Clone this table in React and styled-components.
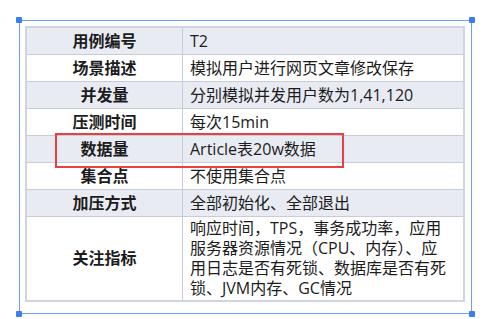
import React from "react";
import styled, { createGlobalStyle } from "styled-components";

const Global = createGlobalStyle`
  html, body {
    margin: 0;
    padding: 0;
    background: #ffffff;
  }
  body {
    font-family: "Open Sans", "Noto Sans CJK SC", sans-serif;
    color: #1c1c1c;
  }
`;

const Page = styled.div`
  width: 500px;
  height: 319px;
  padding: 20px 0 0 19px;
  box-sizing: border-box;
`;

const Frame = styled.div`
  position: relative;
  width: 453px;
  height: 294px;
  box-sizing: border-box;
  border: 1px solid #6f9ff2;
  padding: 5px 0 0 5px;
`;

const Handle = styled.span`
  position: absolute;
  width: 6px;
  height: 6px;
  background: #3a7ef0;
  border-radius: 1px;
  ${(p) => (p.top ? "top: -4px;" : "bottom: -4px;")}
  ${(p) => (p.left ? "left: -4px;" : "right: -4px;")}
`;

const Highlight = styled.div`
  position: absolute;
  left: 35px;
  top: 112px;
  width: 289px;
  height: 35px;
  box-sizing: border-box;
  border: 2px solid #e8413f;
  pointer-events: none;
`;

const Table = styled.table`
  width: 440px;
  border-collapse: collapse;
  border: 2px solid #cfd4df;
  font-size: 16px;
  line-height: 20px;
`;

const Row = styled.tr`
  height: ${(p) => p.h || 27}px;
  background: ${(p) => (p.shaded ? "#e8ebf2" : "#ffffff")};
`;

const Key = styled.td`
  width: 155px;
  padding: 0;
  text-align: center;
  font-weight: 700;
  border: 1px solid #c6ccda;
  vertical-align: middle;
`;

const Value = styled.td`
  padding: 0 6px 0 7px;
  border: 1px solid #c6ccda;
  vertical-align: middle;
  white-space: nowrap;
`;

const Line = styled.div`
  white-space: nowrap;
`;

const rows = [
  { k: "用例编号", v: "T2" },
  { k: "场景描述", v: "模拟用户进行网页文章修改保存" },
  { k: "并发量", v: "分别模拟并发用户数为1,41,120" },
  { k: "压测时间", v: "每次15min" },
  { k: "数据量", v: "Article表20w数据" },
  { k: "集合点", v: "不使用集合点" },
  { k: "加压方式", v: "全部初始化、全部退出" },
  {
    k: "关注指标",
    v: [
      "响应时间，TPS，事务成功率，应用",
      "服务器资源情况（CPU、内存）、应",
      "用日志是否有死锁、数据库是否有死",
      "锁、JVM内存、GC情况",
    ],
    h: 85,
  },
];

export default function App() {
  return (
    <>
      <Global />
      <Page>
        <Frame>
          <Table>
            <tbody>
              {rows.map((r, i) => (
                <Row key={r.k} shaded={i % 2 === 0} h={r.h}>
                  <Key>{r.k}</Key>
                  <Value>
                    {Array.isArray(r.v)
                      ? r.v.map((l) => <Line key={l}>{l}</Line>)
                      : r.v}
                  </Value>
                </Row>
              ))}
            </tbody>
          </Table>
          <Highlight />
          <Handle top left />
          <Handle top />
          <Handle left />
          <Handle />
        </Frame>
      </Page>
    </>
  );
}
